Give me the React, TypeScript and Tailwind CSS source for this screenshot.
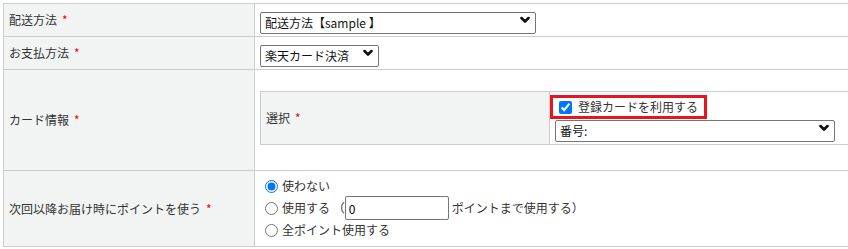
import React from "react";

const FONT = { fontFamily: '"Noto Sans CJK JP", "Noto Sans", sans-serif' };

function Req() {
  return <span className="ml-[5px] text-[12px] text-[#ff0000]">*</span>;
}

function Chevron() {
  return (
    <svg
      width="10"
      height="7"
      viewBox="0 0 10 7"
      className="pointer-events-none absolute right-[6px] top-1/2 -translate-y-1/2"
    >
      <polyline points="1.5,1.5 5,5 8.5,1.5" fill="none" stroke="#111" strokeWidth="2.6" strokeLinecap="round" strokeLinejoin="round" />
    </svg>
  );
}

function FakeSelect({ value, className }: { value: string; className: string }) {
  return (
    <div className={`relative h-[22px] ${className}`}>
      <select
        defaultValue={value}
        className="h-full w-full appearance-none rounded-[2px] border border-[#767676] bg-white pl-[4px] pr-6 text-[12px] text-[#111] outline-none"
        style={FONT}
      >
        <option>{value}</option>
      </select>
      <Chevron />
    </div>
  );
}

function Label({ children }: { children: React.ReactNode }) {
  return (
    <div className="flex items-center border-r border-b border-[#cccccc] bg-[#f2f3f3] pl-[5px] text-[12px] text-[#333]">
      {children}
    </div>
  );
}

function Radio({ checked, children }: { checked?: boolean; children: React.ReactNode }) {
  return (
    <label className="flex items-center">
      <input type="radio" name="point" defaultChecked={checked} className="m-0 ml-[5px] mr-[4px] h-[13px] w-[13px]" />
      {children}
    </label>
  );
}

export default function App() {
  return (
    <div className="h-[249px] w-[848px] overflow-hidden bg-white pl-[3px] pt-[3px]" style={FONT}>
      <div className="grid w-[900px] grid-cols-[251px_1fr] grid-rows-[33px_33px_101px_76px] border-l border-t border-[#cccccc]">
        <Label>
          配送方法<Req />
        </Label>
        <div className="flex items-center border-b border-[#cccccc] pl-[5px]">
          <FakeSelect value="配送方法【sample 】" className="w-[276px]" />
        </div>

        <Label>
          お支払方法<Req />
        </Label>
        <div className="flex items-center border-b border-[#cccccc] pl-[5px]">
          <FakeSelect value="楽天カード決済" className="w-[119px]" />
        </div>

        <Label>
          カード情報<Req />
        </Label>
        <div className="border-b border-[#cccccc] pl-[5px] pt-[21px]">
          <div className="grid h-[54px] grid-cols-[289px_1fr] border-y border-l border-[#cccccc]">
            <div className="flex items-center border-r border-[#cccccc] bg-[#f2f3f3] pl-[5px] text-[12px] text-[#333]">
              選択<Req />
            </div>
            <div className="flex flex-col pt-[3px]">
              <label className="relative z-10 flex h-[24px] w-[157px] items-center border-[3px] border-[#e8151f] bg-white text-[12px] text-[#333]">
                <input type="checkbox" defaultChecked className="m-0 ml-[6px] mr-[6px] h-[13px] w-[13px]" />
                登録カードを利用する
              </label>
              <FakeSelect value="番号:" className="-mt-[2px] ml-[5px] w-[280px]" />
            </div>
          </div>
        </div>

        <Label>
          次回以降お届け時にポイントを使う<Req />
        </Label>
        <div className="flex flex-col border-b border-[#cccccc] pl-[5px] pt-[5px] text-[12px] text-[#333]">
          <div className="flex h-[20px] items-center">
            <Radio checked>使わない</Radio>
          </div>
          <div className="flex h-[24px] items-center">
            <Radio>使用する （</Radio>
            <input
              type="text"
              defaultValue="0"
              className="h-[24px] w-[104px] rounded-[2px] border border-[#767676] px-[3px] text-[12px] text-black outline-none"
              style={FONT}
            />
            <span className="ml-[3px]">ポイントまで使用する）</span>
          </div>
          <div className="flex h-[20px] items-center">
            <Radio>全ポイント使用する</Radio>
          </div>
        </div>
      </div>
    </div>
  );
}
